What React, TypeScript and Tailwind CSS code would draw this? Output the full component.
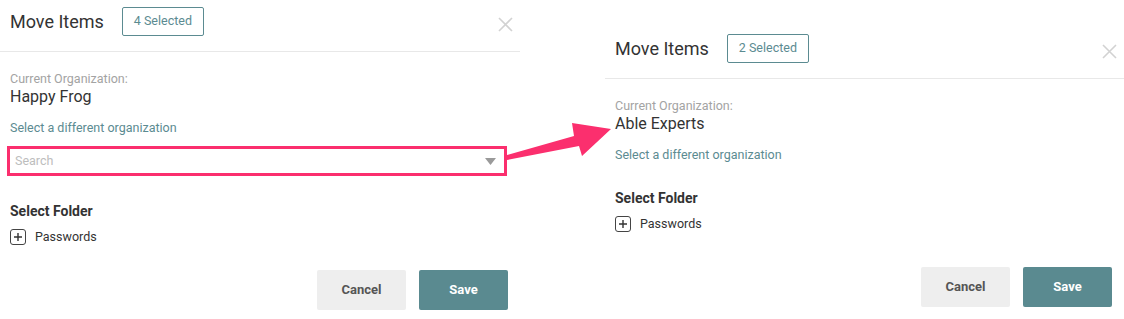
import React from 'react';

type PanelProps = {
  count: number;
  org: string;
  showSearch?: boolean;
  folderGap: string;
  buttonsGap: string;
  className?: string;
};

const CloseIcon: React.FC = () => (
  <svg width="15" height="15" viewBox="0 0 15 15" className="mt-[10px] ml-auto">
    <path d="M1 1 L14 14 M14 1 L1 14" stroke="#d2d2d2" strokeWidth="1.6" fill="none" />
  </svg>
);

const PlusBox: React.FC = () => (
  <span className="w-[16px] h-[16px] border-[1.5px] border-[#444] rounded-[3px] flex items-center justify-center">
    <svg width="10" height="10" viewBox="0 0 10 10">
      <path d="M5 1 V9 M1 5 H9" stroke="#333" strokeWidth="1.4" />
    </svg>
  </span>
);

const Panel: React.FC<PanelProps> = ({ count, org, showSearch, folderGap, buttonsGap, className }) => {
  return (
    <div className={`flex flex-col ${className ?? ''}`}>
      {/* Header */}
      <div className="h-[52px] border-b border-[#e8e8e8] flex items-start pt-[7px] pl-[10px] pr-[7px]">
        <h2 className="text-[18px] leading-[29px] text-[#333]">Move Items</h2>
        <span className="ml-[18px] h-[29px] w-[82px] border border-[#5b8b91] rounded-[2px] flex items-center justify-center text-[12.5px] text-[#5b8b91]">
          {count} Selected
        </span>
        <CloseIcon />
      </div>

      {/* Body */}
      <div className="pl-[10px] flex flex-col">
        <div className="mt-[19px] text-[12.5px] leading-[16px] text-[#a3a3a3]">Current Organization:</div>
        <div className="text-[16px] leading-[20px] text-[#333]">{org}</div>
        <div className="mt-[12px] text-[12.5px] leading-[18px] text-[#5b8b91]">Select a different organization</div>

        {showSearch && (
          <div className="mt-[9px] -ml-[3px] w-[500px] h-[30px] border-[3px] border-[#fb2f6e] flex items-center pl-[5px] pr-[8px]">
            <span className="text-[12.5px] text-[#bdbdbd]">Search</span>
            <svg width="11" height="7" viewBox="0 0 11 7" className="ml-auto">
              <path d="M0 0 H11 L5.5 7 Z" fill="#9a9a9a" />
            </svg>
          </div>
        )}

        <div className={`${folderGap} text-[14px] leading-[20px] font-bold text-[#333]`}>Select Folder</div>
        <div className="mt-[8px] flex items-center gap-[9px] h-[16px]">
          <PlusBox />
          <span className="text-[12.5px] text-[#333]">Passwords</span>
        </div>

        <div className={`${buttonsGap} flex justify-end gap-[13px] pr-[12px]`}>
          <button className="w-[89px] h-[40px] bg-[#eeeeee] rounded-[2px] text-[13px] font-bold text-[#555]">Cancel</button>
          <button className="w-[89px] h-[40px] bg-[#5a8a90] rounded-[2px] text-[13px] font-bold text-white">Save</button>
        </div>
      </div>
    </div>
  );
};

export default function App() {
  return (
    <div className="relative w-[1124px] h-[319px] bg-white overflow-hidden flex items-start font-['Roboto','Liberation_Sans',sans-serif]">
      <Panel count={4} org="Happy Frog" showSearch folderGap="mt-[25px]" buttonsGap="mt-[25px]" className="w-[520px]" />
      <Panel count={2} org="Able Experts" folderGap="mt-[24px]" buttonsGap="mt-[35px]" className="w-[519px] ml-[85px] mt-[27px]" />

      {/* annotation arrow */}
      <svg className="absolute left-0 top-0 pointer-events-none" width="1124" height="319" viewBox="0 0 1124 319">
        <polygon
          points="507,155 574,136 572,123 611,129 582,156 579,146 507,160"
          fill="#fb2f6e"
        />
      </svg>
    </div>
  );
}
